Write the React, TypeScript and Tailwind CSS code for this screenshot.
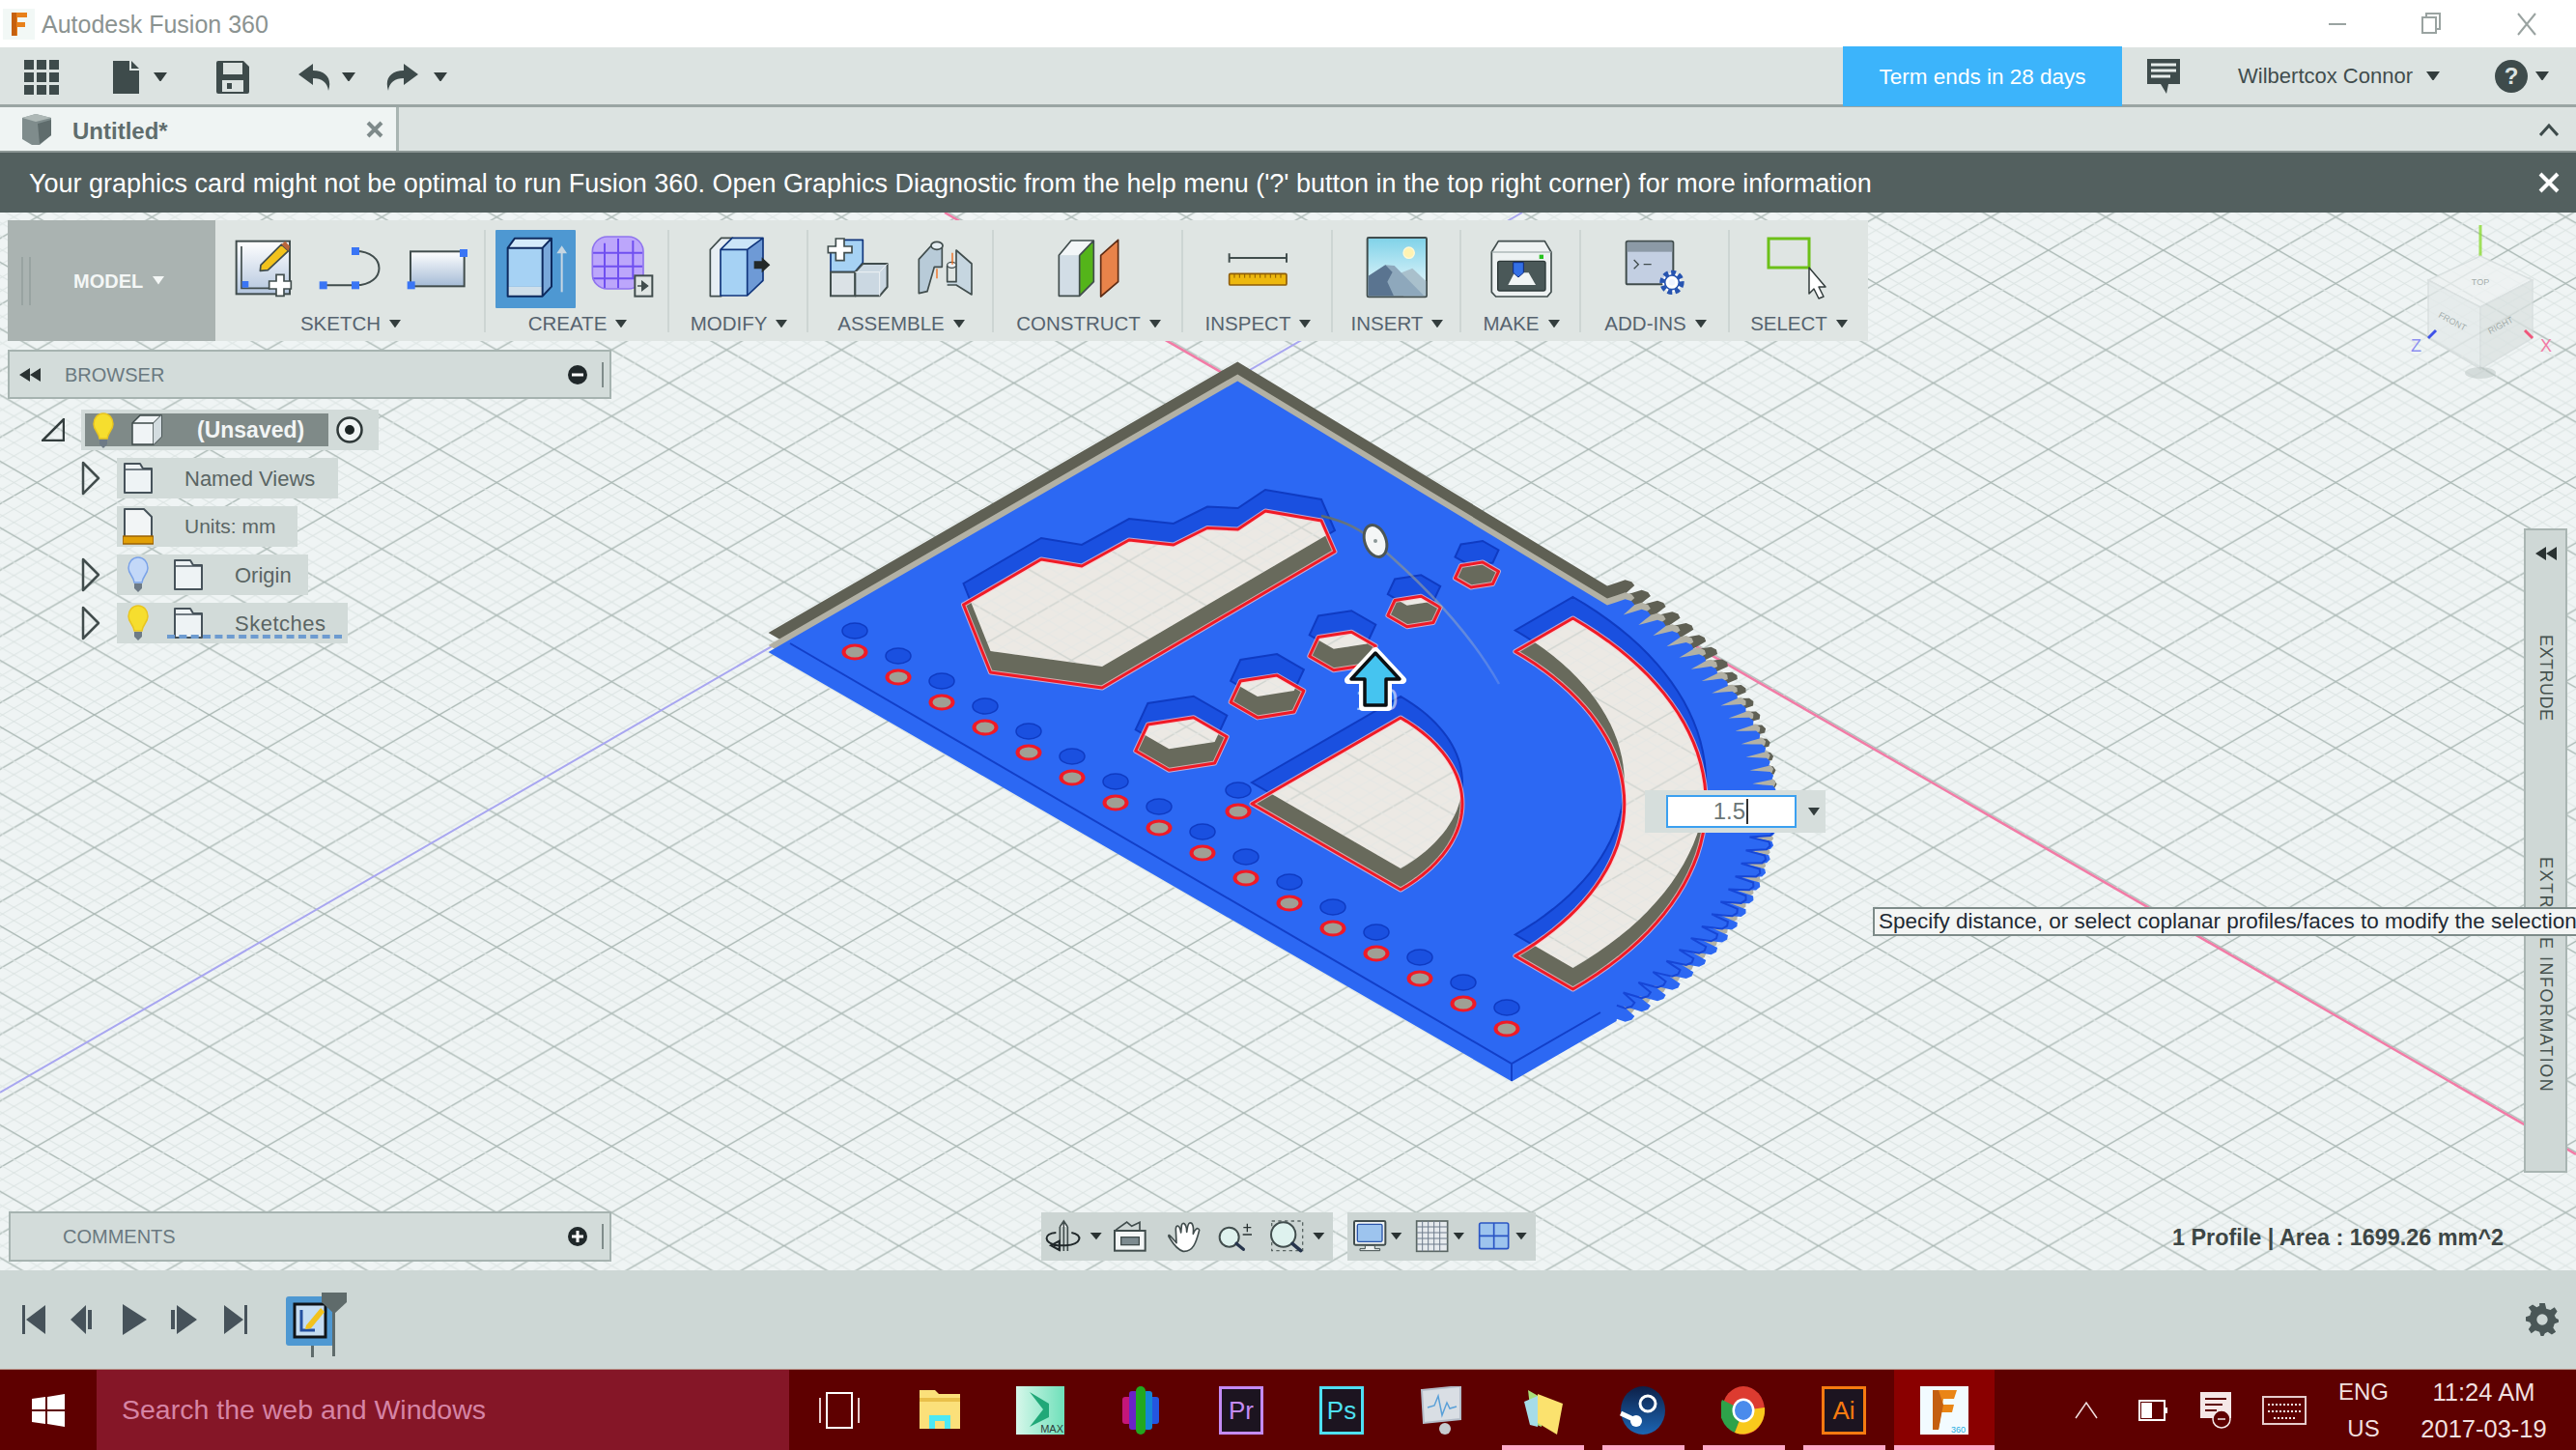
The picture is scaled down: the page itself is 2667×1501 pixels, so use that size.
import React from 'react';

const sans = 'font-["Liberation_Sans",Arial,sans-serif]';

// iso projection of the plate: u runs down-right, v runs up-right, centred on the sector apex
const P = (u: number, v: number): [number, number] => [1296 + 0.866 * (u + v), 832 + 0.5 * (u - v)];
const pol = (r: number, deg: number): [number, number] => {
  const t = (deg * Math.PI) / 180;
  return P(r * Math.cos(t), r * Math.sin(t));
};
const toPath = (pts: [number, number][]) =>
  'M' + pts.map((p) => `${p[0].toFixed(1)} ${p[1].toFixed(1)}`).join('L') + 'Z';
const openPath = (pts: [number, number][]) =>
  'M' + pts.map((p) => `${p[0].toFixed(1)} ${p[1].toFixed(1)}`).join('L');
const arc = (r: number, from: number, to: number, n = 40) =>
  Array.from({ length: n + 1 }, (_, i) => pol(r, from + ((to - from) * i) / n));

const R = 436;
const TEETH = 34;
const teeth = (() => {
  const pts: [number, number][] = [];
  for (let i = 0; i < TEETH; i++) {
    const s = 90 - (i * 90) / TEETH;
    const w = 90 / TEETH;
    pts.push(pol(R - 11, s), pol(R - 2, s - w * 0.12), pol(R + 6, s - w * 0.22), pol(R + 8, s - w * 0.5), pol(R + 6, s - w * 0.78), pol(R - 2, s - w * 0.88));
  }
  return pts;
})();
const plate = toPath([P(-453, -125), P(-453, R), ...teeth, P(R, 0), P(R, -125)]);
const lowerTeeth = openPath(teeth.slice(Math.round(TEETH * 0.55) * 6));

const bigCut = toPath([
  [997.5, 626], [1078, 579], [1120, 586], [1169, 559], [1215, 564], [1250, 546.5],
  [1281.6, 548], [1310, 529], [1368, 539], [1382, 571], [1141, 712], [1025.5, 696],
]);
const sector = toPath([[1296, 832], ...arc(178, 90, 0)]);
const slot = toPath([...arc(384, 90, 0), ...arc(315, 0, 90)]);
const hex = (cx: number, cy: number, r: number) =>
  toPath(
    [0, 60, 120, 180, 240, 300].map((d) => {
      const p = pol(r, d);
      return [p[0] - 1296 + cx, p[1] - 832 + cy] as [number, number];
    })
  );
const cuts = [
  { id: 'c1', d: bigCut },
  { id: 'c2', d: sector },
  { id: 'c3', d: slot },
  { id: 'c4', d: hex(1529, 595, 19) },
  { id: 'c5', d: hex(1464, 633, 23) },
  { id: 'c6', d: hex(1390, 674, 29) },
  { id: 'c7', d: hex(1312, 721, 32) },
  { id: 'c8', d: hex(1223, 770, 40) },
];
const holes = Array.from({ length: 16 }, (_, i) => [885 + 45 * i, 675 + 26 * i]);

const gridLines = [-5, -4, -3, -2, -1, 0, 1, 2, 3, 4, 5];

const Cut = ({ id, d }: { id: string; d: string }) => (
  <g>
    <clipPath id={id}>
      <path d={d} />
    </clipPath>
    <path d={d} transform="translate(0 -22)" fill="#1a50e0" stroke="#0f3bc2" strokeWidth="2" />
    <path d={d} fill="#686a5c" />
    <g clipPath={`url(#${id})`}>
      <path d={d} transform="translate(0 -22)" fill="#ece9e4" />
      <path d={d} transform="translate(0 -22)" fill="url(#grid)" opacity="0.45" />
    </g>
    <path d={d} fill="none" stroke="#ffc9cf" strokeWidth="5" strokeLinejoin="round" opacity="0.7" />
    <path d={d} fill="none" stroke="#f01a26" strokeWidth="3" strokeLinejoin="round" />
  </g>
);

const Hole = ({ x, y }: { x: number; y: number }) => (
  <g>
    <ellipse cx={x} cy={y - 22} rx="13" ry="8" fill="#1a50e0" stroke="#0f3bc2" strokeWidth="1.5" />
    <ellipse cx={x} cy={y} rx="13.5" ry="8.5" fill="#f01a26" />
    <ellipse cx={x} cy={y} rx="9.5" ry="5.5" fill="#a09f94" />
  </g>
);

// the workspace drawing: grid, axes, model and manipulators, in page coordinates
const Scene = () => (
  <svg className="absolute inset-0 w-full h-full" viewBox="0 220 2667 1095">
    <defs>
      <pattern id="grid" width="119" height="68.7" patternUnits="userSpaceOnUse" patternTransform="translate(2001.7 740)">
        {gridLines.map((k) => (
          <g key={k}>
            <line x1="0" x2="119" y1={k * 13.74} y2={68.7 + k * 13.74} stroke={k % 5 === 0 ? '#a9b7b3' : '#dce4e3'} strokeWidth={k % 5 === 0 ? 1.4 : 1} />
            <line x1="0" x2="119" y1={68.7 + k * 13.74} y2={k * 13.74} stroke={k % 5 === 0 ? '#a9b7b3' : '#dce4e3'} strokeWidth={k % 5 === 0 ? 1.4 : 1} />
          </g>
        ))}
      </pattern>
      <linearGradient id="fadeArc" x1="0" y1="0" x2="1" y2="1">
        <stop offset="0" stopColor="#5f6b6b" />
        <stop offset="1" stopColor="#cfd6d6" stopOpacity="0.2" />
      </linearGradient>
    </defs>
    <rect x="0" y="220" width="2667" height="1095" fill="#eff4f4" />
    <rect x="0" y="220" width="2667" height="1095" fill="url(#grid)" />
    <line x1="978" y1="220" x2="2667" y2="1195" stroke="#f27ba6" strokeWidth="2.5" />
    <line x1="0" y1="1131" x2="1576" y2="220" stroke="#a8a6f0" strokeWidth="2" />

    <path d={plate} transform="translate(0 -13)" fill="#5f6054" />
    <path d={plate} fill="#b2b1a5" />
    <path d={plate} transform="translate(0 7)" fill="#2c68f3" />
    <path d={lowerTeeth} transform="translate(0 -7)" fill="none" stroke="#1646d6" strokeWidth="2" />
    <polyline points="818,666 1565,1101 1657,1048" fill="none" stroke="#123fc8" strokeWidth="2" />
    <line x1="1565" y1="1101" x2="1565" y2="1119" stroke="#123fc8" strokeWidth="2" />

    {holes.map(([x, y]) => (
      <Hole key={x} x={x} y={y} />
    ))}
    {cuts.map((c) => (
      <Cut key={c.id} id={c.id} d={c.d} />
    ))}
    <Hole x={1282} y={840} />

    <path d="M1368 534C1395 540 1412 550 1424 562C1480 610 1525 660 1552 708" fill="none" stroke="url(#fadeArc)" strokeWidth="2.5" />
    <ellipse cx="1424" cy="560" rx="11" ry="17" transform="rotate(-20 1424 560)" fill="#f4f6f6" stroke="#4c5656" strokeWidth="3" />
    <circle cx="1424" cy="560" r="2" fill="#8a9696" />

    <text x="1425" y="735" textAnchor="middle" fontSize="32" fontFamily="Liberation Sans" fill="#ffffff" opacity="0.55">1.0</text>
    <path d="M1424 674L1452 704H1437V732H1411V704H1396Z" fill="#ffffff" stroke="#ffffff" strokeWidth="8" strokeLinejoin="round" />
    <path d="M1424 676L1449 703H1435V730H1413V703H1399Z" fill="#45c4f0" stroke="#0b0f12" strokeWidth="3.5" strokeLinejoin="round" />

    {/* view cube */}
    <g>
      <line x1="2568" y1="233" x2="2568" y2="265" stroke="#8ddc35" strokeWidth="3" opacity="0.8" />
      <g opacity="0.75">
        <path d="M2568 265L2622 290L2568 318L2514 290Z" fill="#eef2f2" stroke="#d3dada" strokeWidth="1.5" />
        <path d="M2514 290L2568 318V382L2514 350Z" fill="#e4eaea" stroke="#d3dada" strokeWidth="1.5" />
        <path d="M2622 290L2568 318V382L2622 350Z" fill="#dbe2e1" stroke="#d3dada" strokeWidth="1.5" />
        <text x="2568" y="295" textAnchor="middle" fontSize="9" fontFamily="Liberation Sans" fill="#8b9693">TOP</text>
        <text x="0" y="0" transform="translate(2524 328) rotate(28)" fontSize="9" fontFamily="Liberation Sans" fill="#8b9693">FRONT</text>
        <text x="0" y="0" transform="translate(2578 346) rotate(-28)" fontSize="9" fontFamily="Liberation Sans" fill="#8b9693">RIGHT</text>
      </g>
      <ellipse cx="2568" cy="386" rx="16" ry="6" fill="#b9c4c2" opacity="0.5" />
      <line x1="2514" y1="350" x2="2522" y2="342" stroke="#3f52e8" strokeWidth="3" />
      <line x1="2622" y1="350" x2="2614" y2="342" stroke="#f0557a" strokeWidth="3" />
      <text x="2496" y="364" fontSize="18" fontFamily="Liberation Sans" fill="#8d90f0">Z</text>
      <text x="2630" y="364" fontSize="18" fontFamily="Liberation Sans" fill="#f27ba6">X</text>
    </g>
  </svg>
);

const Caret = ({ c = '#333d3d', s = 12 }: { c?: string; s?: number }) => (
  <svg width={s} height={s * 0.7} viewBox="0 0 10 7" className="shrink-0">
    <path d="M0 0H10L5 7Z" fill={c} />
  </svg>
);

// Ribbon icons are all 75px tall, drawn in a 3x space
const Ico = ({ x, w, children }: { x: number; w: number; children: React.ReactNode }) => (
  <svg width={w / 3} height={75} viewBox={`${x} 39 ${w} 225`} className="shrink-0">
    {children}
  </svg>
);

const ink = '#414d4d';

const SketchIcon = () => (
  <Ico x={60} w={195}>
    <defs>
      <linearGradient id="sk" x1="0" y1="0" x2="0" y2="1">
        <stop offset="0" stopColor="#ffffff" />
        <stop offset="1" stopColor="#b4c6de" />
      </linearGradient>
    </defs>
    <rect x="74" y="74" width="166" height="164" fill="url(#sk)" stroke={ink} strokeWidth="6" />
    <path d="M90 90V220H180" fill="none" stroke={ink} strokeWidth="5" />
    <rect x="92" y="198" width="20" height="20" fill="#3a75f5" />
    <path d="M150 148L214 84L236 104L172 164L148 166Z" fill="#f2c21c" stroke={ink} strokeWidth="5" strokeLinejoin="round" />
    <path d="M214 84L226 74L240 90L236 104Z" fill="#b9653a" />
    <path d="M198 178H222V198H244V222H222V244H198V222H176V198H198Z" fill="#ffffff" stroke={ink} strokeWidth="5" />
  </Ico>
);
const LineIcon = () => (
  <Ico x={330} w={200}>
    <path d="M347 211H447C545 211 545 105 447 105" fill="none" stroke={ink} strokeWidth="6" />
    <rect x="335" y="199" width="24" height="24" fill="#3a75f5" />
    <rect x="435" y="199" width="24" height="24" fill="#3a75f5" />
    <rect x="435" y="93" width="24" height="24" fill="#3a75f5" />
  </Ico>
);
const RectIcon = () => (
  <Ico x={600} w={200}>
    <defs>
      <linearGradient id="rc" x1="0" y1="0" x2="0" y2="1">
        <stop offset="0" stopColor="#ffffff" />
        <stop offset="1" stopColor="#a5bbd6" />
      </linearGradient>
    </defs>
    <rect x="615" y="106" width="167" height="108" fill="url(#rc)" stroke={ink} strokeWidth="6" />
    <rect x="768" y="99" width="24" height="24" fill="#3a75f5" />
    <rect x="605" y="199" width="24" height="24" fill="#3a75f5" />
  </Ico>
);
const ExtrudeIcon = () => (
  <Ico x={900} w={200}>
    <path d="M914 95L936 65H1050L1022 95Z" fill="#d4ebfa" />
    <rect x="914" y="95" width="108" height="120" fill="#a6d2f4" />
    <rect x="914" y="215" width="108" height="30" fill="#cfdfea" />
    <path d="M1022 95L1050 65V215L1022 245Z" fill="#79a8da" />
    <path d="M914 95L936 65H1050V215L1022 245H914ZM914 95H1022V245M1022 95L1050 65" fill="none" stroke="#0e2a5e" strokeWidth="6" strokeLinejoin="round" />
    <path d="M1082 232V110" stroke="#c6d6e2" strokeWidth="6" />
    <path d="M1082 88L1098 112H1066Z" fill="#c6d6e2" />
  </Ico>
);
const FormIcon = () => (
  <Ico x={1170} w={205}>
    <rect x="1180" y="60" width="158" height="162" rx="46" fill="#bca6fb" />
    <path d="M1180 110H1335M1180 152H1335M1180 190H1310M1218 80V220M1260 66V220M1306 72V190" stroke="#6f4ff0" strokeWidth="6" fill="none" />
    <rect x="1180" y="60" width="158" height="162" rx="46" fill="none" stroke="#8f74ee" strokeWidth="5" />
    <rect x="1312" y="181" width="54" height="64" fill="#dfe5e3" stroke={ink} strokeWidth="6" />
    <path d="M1320 213H1334M1334 199L1352 213L1334 227Z" fill={ink} stroke={ink} strokeWidth="4" />
  </Ico>
);
const ModifyIcon = () => (
  <Ico x={40} w={200}>
    <path d="M50 100L84 64H120L84 100V245H50Z" fill="#e7eef3" stroke={ink} strokeWidth="5" strokeLinejoin="round" />
    <path d="M82 100H165V243H82Z" fill="#a6d2f4" />
    <path d="M82 100L118 64H214L165 100Z" fill="#cbe5f8" />
    <path d="M165 100L214 64V196L165 243Z" fill="#6e9ad6" />
    <path d="M82 100L118 64H214V196L165 243H82ZM82 100H165V243M165 100L214 64" fill="none" stroke="#10357c" strokeWidth="5" strokeLinejoin="round" />
    <path d="M186 136H210V124L236 148L210 172V160H186Z" fill="#222828" />
  </Ico>
);
const AssembleIcon = () => (
  <Ico x={405} w={200}>
    <path d="M420 110L450 70H520V140L495 170H420Z" fill="#a6d2f4" stroke="#10357c" strokeWidth="5" strokeLinejoin="round" />
    <rect x="420" y="170" width="76" height="74" fill="#dbe2e6" stroke={ink} strokeWidth="6" />
    <path d="M496 170L520 144H596V216L572 244H496Z" fill="#cbd8e2" stroke={ink} strokeWidth="6" strokeLinejoin="round" />
    <path d="M496 170H572V244M572 170L596 144" fill="none" stroke="#eef2f4" strokeWidth="3" />
    <path d="M436 66H462V90H486V110H462V134H436V110H412V90H436Z" fill="#ffffff" stroke={ink} strokeWidth="5" />
  </Ico>
);
const JointIcon = () => (
  <Ico x={680} w={195}>
    <path d="M696 130L738 84L768 84V154H744L722 230L696 236Z" fill="#b8cbd8" stroke={ink} strokeWidth="5" strokeLinejoin="round" />
    <ellipse cx="752" cy="88" rx="18" ry="12" fill="#e4edf2" stroke={ink} strokeWidth="5" />
    <path d="M752 160V190" stroke="#f06a18" strokeWidth="4" />
    <path d="M784 150V200H812V102L860 144V240L812 210H784" fill="#c6d6e0" stroke={ink} strokeWidth="5" strokeLinejoin="round" />
    <ellipse cx="798" cy="148" rx="14" ry="9" fill="#eef2f5" stroke={ink} strokeWidth="4" />
    <path d="M800 110V146" stroke="#f06a18" strokeWidth="4" />
  </Ico>
);
const ConstructIcon = () => (
  <Ico x={1125} w={200}>
    <path d="M1132 118L1170 72H1240L1196 118Z" fill="#f3f6f8" />
    <path d="M1132 118H1196V244H1132Z" fill="#d2dde6" />
    <path d="M1196 118L1240 72V200L1196 244Z" fill="#54b41a" />
    <path d="M1132 118L1170 72H1240V200L1196 244H1132ZM1196 118V244M1196 118L1240 72" fill="none" stroke={ink} strokeWidth="5" strokeLinejoin="round" />
    <path d="M1262 118L1316 70V200L1262 246Z" fill="#e8834a" stroke="#5e2c14" strokeWidth="5" strokeLinejoin="round" />
  </Ico>
);
const InspectIcon = () => (
  <Ico x={85} w={200}>
    <path d="M96 126H274M96 112V140M274 112V140" stroke={ink} strokeWidth="6" fill="none" />
    <rect x="96" y="175" width="178" height="35" rx="4" fill="#edb80e" stroke="#8e5c06" strokeWidth="5" />
    <path d="M112 176v12M128 176v12M144 176v12M160 176v12M176 176v12M192 176v12M208 176v12M224 176v12M240 176v12M256 176v12" stroke="#8e5c06" strokeWidth="3" />
  </Ico>
);
const InsertIcon = () => (
  <Ico x={520} w={200}>
    <defs>
      <linearGradient id="sky" x1="0" y1="0" x2="0" y2="1">
        <stop offset="0" stopColor="#7fd2e8" />
        <stop offset="1" stopColor="#f4fcff" />
      </linearGradient>
    </defs>
    <rect x="528" y="63" width="184" height="184" rx="4" fill="url(#sky)" stroke={ink} strokeWidth="6" />
    <circle cx="657" cy="110" r="17" fill="#fff3b2" stroke="#fff9d6" strokeWidth="4" />
    <path d="M634 172L668 158L710 198V244H640Z" fill="#a9c0cc" />
    <path d="M531 182L584 148L612 150L704 244H531Z" fill="#8ea8bc" />
    <path d="M531 182L584 148L606 170L590 200L610 244H531Z" fill="#5a7490" />
  </Ico>
);
const MakeIcon = () => (
  <Ico x={905} w={205}>
    <path d="M915 108L936 74H1080L1100 108V232L1088 246H928L915 232Z" fill="#eef2f2" stroke={ink} strokeWidth="5" strokeLinejoin="round" />
    <path d="M916 108H1099" stroke="#aeb9b9" strokeWidth="4" />
    <rect x="934" y="136" width="148" height="92" rx="6" fill="#4a5858" stroke="#2d3838" strokeWidth="4" />
    <path d="M966 210L986 172H1030L1052 210Z" fill="#f0f4f4" />
    <path d="M982 140H1014V172L998 186L982 172Z" fill="#3470e6" stroke="#0e2a7c" strokeWidth="3" />
    <rect x="1063" y="116" width="13" height="13" fill="#26c21e" />
  </Ico>
);
const AddinsIcon = () => (
  <Ico x={1320} w={200}>
    <rect x="1328" y="74" width="146" height="134" rx="5" fill="#c3cfe2" stroke={ink} strokeWidth="6" />
    <rect x="1331" y="77" width="140" height="30" fill="#8c9aa6" />
    <path d="M1352 132L1366 146L1352 160M1382 146H1406" stroke={ink} strokeWidth="4" fill="none" />
    <circle cx="1470" cy="202" r="30" fill="#ffffff" stroke="#2754b0" strokeWidth="16" strokeDasharray="14 9" />
    <circle cx="1470" cy="202" r="22" fill="#ffffff" stroke="#2754b0" strokeWidth="5" />
    <circle cx="1470" cy="202" r="10" fill="#eef3ff" />
  </Ico>
);
const SelectIcon = () => (
  <svg width="75" height="75" viewBox="1827 238 75 75" className="shrink-0">
    <rect x="1833" y="247" width="42" height="30" fill="none" stroke="#6cc018" strokeWidth="3" />
    <path d="M1875 277L1892 297H1885L1890 307L1885 309L1880 299L1875 304Z" fill="#fff" stroke="#333d3d" strokeWidth="1.5" strokeLinejoin="round" />
  </svg>
);

const groups: { label: string; w: string; gap: string; icons: React.ReactNode }[] = [
  { label: 'SKETCH', w: 'w-[280px]', gap: 'gap-[24px]', icons: <><SketchIcon /><LineIcon /><RectIcon /></> },
  { label: 'CREATE', w: 'w-[190px]', gap: 'gap-[14px] pr-[5px]', icons: <><div className="w-[83px] h-[81px] bg-[#4e98d2] rounded-[1px] flex justify-center"><ExtrudeIcon /></div><FormIcon /></> },
  { label: 'MODIFY', w: 'w-[144px]', gap: 'gap-0', icons: <ModifyIcon /> },
  { label: 'ASSEMBLE', w: 'w-[192px]', gap: 'gap-[25px]', icons: <><AssembleIcon /><JointIcon /></> },
  { label: 'CONSTRUCT', w: 'w-[196px]', gap: 'gap-0', icons: <ConstructIcon /> },
  { label: 'INSPECT', w: 'w-[155px]', gap: 'gap-0', icons: <InspectIcon /> },
  { label: 'INSERT', w: 'w-[133px]', gap: 'gap-0', icons: <InsertIcon /> },
  { label: 'MAKE', w: 'w-[124px]', gap: 'gap-0', icons: <MakeIcon /> },
  { label: 'ADD-INS', w: 'w-[154px]', gap: 'gap-0', icons: <AddinsIcon /> },
  { label: 'SELECT', w: 'w-[143px]', gap: 'gap-0', icons: <SelectIcon /> },
];

const Ribbon = () => (
  <div className="absolute left-[8px] top-[8px] h-[125px] flex bg-[#dfe5e3]">
    <div className="w-[215px] bg-[#aab3b1] flex items-center relative">
      <div className="w-[10px] h-[50px] ml-[14px] border-x-2 border-[#98a3a1]" />
      <span className="ml-[44px] text-[20px] font-bold text-[#f4f7f6]">MODEL</span>
      <span className="ml-[10px]"><Caret c="#f4f7f6" /></span>
    </div>
    {groups.map((g, i) => (
      <div key={g.label} className={`${g.w} shrink-0 flex flex-col items-center pt-[10px] relative`}>
        <div className={`h-[82px] flex ${g.gap}`}>{g.icons}</div>
        <div className="flex items-center gap-[9px] h-[30px]">
          <span className="text-[20.5px] leading-none text-[#56636f]">{g.label}</span>
          <Caret />
        </div>
        {i < groups.length - 1 && <div className="absolute right-0 top-[10px] w-[2px] h-[106px] bg-[#cdd5d3]" />}
      </div>
    ))}
  </div>
);

const Bulb = ({ on }: { on: boolean }) => (
  <svg width="22" height="38" viewBox="0 0 22 38">
    <path d="M11 1C5 1 1 6 1 12C1 18 6 20 7 27H15C16 20 21 18 21 12C21 6 17 1 11 1Z" fill={on ? '#f6de2e' : '#c3d8f8'} stroke={on ? '#e9c51f' : '#7aa2e8'} strokeWidth="1.5" />
    <path d="M7 28H15V33L11 37L7 33Z" fill="#6d7a86" />
  </svg>
);
const Folder = () => (
  <svg width="32" height="34" viewBox="0 0 32 34">
    <path d="M2 7V2H18L21 7H30V32H2Z" fill="#eef3f5" stroke="#46525a" strokeWidth="2" strokeLinejoin="round" />
    <path d="M2 8H30" stroke="#46525a" strokeWidth="1.5" />
  </svg>
);
const Chev = () => (
  <svg width="20" height="36" viewBox="0 0 20 36" className="shrink-0">
    <path d="M2 2L18 18L2 34Z" fill="none" stroke="#424d4d" strokeWidth="2.5" strokeLinejoin="round" />
  </svg>
);

const Browser = () => (
  <div className="absolute left-[8px] top-[142px] w-[625px]">
    <div className="h-[51px] bg-[#d3dcda] border-2 border-[#a6b3b0] flex items-center">
      <svg width="22" height="14" viewBox="0 0 22 14" className="ml-[10px]">
        <path d="M11 0V14L0 7ZM22 0V14L11 7Z" fill="#2a3232" />
      </svg>
      <span className="ml-[25px] text-[20px] text-[#6a7980]">BROWSER</span>
      <svg width="20" height="20" viewBox="0 0 20 20" className="ml-auto">
        <circle cx="10" cy="10" r="10" fill="#20282a" />
        <rect x="4" y="8.5" width="12" height="3" fill="#fff" />
      </svg>
      <div className="w-[4px] h-[26px] ml-[15px] mr-[4px] border-l-2 border-[#7f8b8a]" />
    </div>
    <div className="mt-[11px] flex flex-col gap-[8px] text-[22px] text-[#5a6564]">
      <div className="flex items-center h-[42px]">
        <svg width="24" height="24" viewBox="0 0 24 24" className="ml-[35px]">
          <path d="M23 1V23H1Z" fill="none" stroke="#333d3d" strokeWidth="2.5" />
        </svg>
        <div className="ml-[17px] w-[308px] h-[42px] bg-[#d2dbd9] flex items-center px-[4px]">
          <div className="w-[252px] h-[34px] bg-[#7f8a88] flex items-center">
            <span className="ml-[8px] mt-[1px]"><Bulb on /></span>
            <svg width="34" height="34" viewBox="0 0 34 34" className="ml-[17px]">
              <path d="M2 10L10 2H32V24L24 32H2Z" fill="#f0f4f6" stroke="#3e4a4a" strokeWidth="1.5" />
              <path d="M2 10H24V32M24 10L32 2" fill="none" stroke="#3e4a4a" strokeWidth="1.5" />
              <path d="M24 10L32 2V24L24 32Z" fill="#d3dce0" />
            </svg>
            <span className="ml-[35px] text-[23px] font-bold text-[#f2f5f5]">(Unsaved)</span>
          </div>
          <svg width="28" height="28" viewBox="0 0 28 28" className="ml-[8px]">
            <circle cx="14" cy="14" r="12.5" fill="#f0f4f4" stroke="#2e3838" strokeWidth="2.5" />
            <circle cx="14" cy="14" r="5" fill="#1c2424" />
          </svg>
        </div>
      </div>
      <div className="flex items-center h-[42px] pl-[76px]">
        <Chev />
        <div className="ml-[17px] w-[229px] h-[42px] bg-[#d2dbd9] flex items-center pl-[6px]">
          <Folder />
          <span className="ml-[32px] whitespace-nowrap">Named Views</span>
        </div>
      </div>
      <div className="flex items-center h-[42px] pl-[113px]">
        <div className="w-[187px] h-[42px] bg-[#d2dbd9] flex items-center pl-[6px]">
          <svg width="32" height="38" viewBox="0 0 32 38">
            <path d="M2 30V1H22L30 9V30Z" fill="#f2f5f6" stroke="#46525a" strokeWidth="2" strokeLinejoin="round" />
            <rect x="0" y="29" width="32" height="8" rx="1" fill="#e2a006" stroke="#9a6204" strokeWidth="1.5" />
          </svg>
          <span className="ml-[32px] text-[21px]">Units: mm</span>
        </div>
      </div>
      <div className="flex items-center h-[42px] pl-[76px]">
        <Chev />
        <div className="ml-[17px] w-[198px] h-[42px] bg-[#d2dbd9] flex items-center pl-[11px]">
          <Bulb on={false} />
          <span className="ml-[25px]"><Folder /></span>
          <span className="ml-[32px]">Origin</span>
        </div>
      </div>
      <div className="flex items-center h-[42px] pl-[76px]">
        <Chev />
        <div className="ml-[17px] w-[239px] h-[42px] bg-[#d2dbd9] flex items-center pl-[11px] relative">
          <Bulb on />
          <span className="ml-[25px]"><Folder /></span>
          <span className="ml-[32px] tracking-[0.5px]">Sketches</span>
          <div className="absolute left-[52px] right-[6px] top-[32px] h-[5px] border-b-4 border-dashed border-[#6d9bd0]" />
        </div>
      </div>
    </div>
  </div>
);

const ViewControls = () => (
  <div className="absolute left-[1078px] top-[1035px] h-[50px] flex gap-[15px]">
    <div className="w-[302px] h-[50px] bg-[#ccd5d3] flex items-center">
      <svg width="302" height="50" viewBox="54 15 906 150">
        <path d="M124 42V135M112 60L124 42L136 60M112 60V135M136 60V135" fill="#fff" stroke={ink} strokeWidth="5" />
        <path d="M105 118C60 110 60 80 100 78M148 78C185 84 180 115 130 118H92M110 104L84 118L110 132Z" fill="none" stroke="#20282a" strokeWidth="6" />
        <path d="M206 78H242L225 100Z" fill="#2a3333" />
        <path d="M285 70L320 45L335 58L360 46V72" fill="none" stroke={ink} strokeWidth="5" />
        <rect x="282" y="72" width="95" height="62" fill="#f4f7f7" stroke={ink} strokeWidth="6" />
        <rect x="302" y="92" width="56" height="24" fill="#7d8b90" stroke={ink} strokeWidth="4" />
        <path d="M450 90C460 105 470 128 495 136C525 138 535 110 545 70C540 58 530 70 526 82C528 60 525 46 515 48C510 50 508 60 506 76C506 46 492 44 490 56L488 78C484 52 472 52 472 68L474 110C462 96 448 78 450 90Z" fill="#fff" stroke={ink} strokeWidth="5" strokeLinejoin="round" />
        <circle cx="638" cy="92" r="30" fill="#def2ee" stroke={ink} strokeWidth="6" />
        <path d="M660 112L682 130" stroke="#26344c" strokeWidth="10" strokeLinecap="round" />
        <path d="M694 50V76M682 62H706M680 84H708" stroke="#2a3333" strokeWidth="4" />
        <rect x="770" y="42" width="96" height="92" fill="none" stroke="#5a6664" strokeWidth="4" strokeDasharray="10 10" />
        <circle cx="806" cy="84" r="38" fill="#def2ee" stroke={ink} strokeWidth="6" />
        <path d="M834 112L860 134" stroke="#26344c" strokeWidth="11" strokeLinecap="round" />
        <path d="M898 78H934L916 100Z" fill="#2a3333" />
      </svg>
    </div>
    <div className="w-[195px] h-[50px] bg-[#ccd5d3] flex items-center">
      <svg width="195" height="50" viewBox="1005 15 585 150">
        <rect x="1026" y="42" width="97" height="74" rx="4" fill="#f1f4f4" stroke={ink} strokeWidth="6" />
        <rect x="1036" y="52" width="77" height="54" rx="4" fill="#9dc4ee" stroke="#2a55aa" strokeWidth="4" />
        <path d="M1060 118H1090V128H1106V134H1044V128H1060Z" fill="#eef1f1" stroke={ink} strokeWidth="3" />
        <path d="M1140 78H1174L1157 100Z" fill="#2a3333" />
        <rect x="1220" y="42" width="96" height="94" fill="#e6eaee" stroke="#5a6664" strokeWidth="5" />
        <path d="M1220 60H1316M1220 78H1316M1220 96H1316M1220 114H1316M1238 42V136M1256 42V136M1274 42V136M1292 42V136" stroke="#6f7c8c" strokeWidth="3" />
        <path d="M1334 78H1368L1351 100Z" fill="#2a3333" />
        <rect x="1415" y="48" width="90" height="80" rx="5" fill="#9dc4ee" stroke="#2a55c4" strokeWidth="5" />
        <path d="M1460 48V128M1415 88H1505" stroke="#2a55c4" strokeWidth="5" />
        <path d="M1528 78H1562L1545 100Z" fill="#2a3333" />
      </svg>
    </div>
  </div>
);

const RightPanel = () => (
  <div className="absolute left-[2613px] top-[327px] w-[45px] h-[667px] bg-[#cfd8d6] border-2 border-[#a9b5b2] flex flex-col items-center">
    <svg width="22" height="14" viewBox="0 0 22 14" className="mt-[17px]">
      <path d="M11 0V14L0 7ZM22 0V14L11 7Z" fill="#2a3232" />
    </svg>
    <span className="mt-[77px] [writing-mode:vertical-rl] text-[18px] tracking-[0.5px] text-[#46524f]">EXTRUDE</span>
    <span className="mt-[140px] [writing-mode:vertical-rl] text-[18px] tracking-[1.5px] text-[#46524f]">EXTRUDE INFORMATION</span>
  </div>
);

const AdobeTile = ({ box, t }: { box: string; t: string }) => (
  <div className={`w-[46px] h-[50px] bg-[#1c1420] border-[3px] flex items-center justify-center text-[26px] leading-none ${box}`}>
    {t}
  </div>
);

const Taskbar = () => {
  const slots: { el: React.ReactNode; active?: boolean }[] = [
    {
      el: (
        <svg width="42" height="42" viewBox="0 0 42 42">
          <rect x="8" y="3" width="26" height="36" fill="none" stroke="#fff" strokeWidth="2" />
          <path d="M1 8V34M41 8V34" stroke="#e7cccc" strokeWidth="2" />
        </svg>
      ),
    },
    {
      el: (
        <svg width="46" height="46" viewBox="0 0 46 46">
          <path d="M2 6V2H18L22 6H44V42H2Z" fill="#fbe07a" />
          <rect x="2" y="10" width="42" height="4" fill="#e9c04a" />
          <path d="M12 42V28H34V42H28V34H18V42Z" fill="#4de8f4" />
        </svg>
      ),
    },
    {
      el: (
        <svg width="50" height="50" viewBox="0 0 50 50">
          <defs>
            <linearGradient id="mx" x1="0" y1="0" x2="1" y2="0">
              <stop offset="0" stopColor="#d6f7ea" />
              <stop offset="1" stopColor="#6fe0ba" />
            </linearGradient>
          </defs>
          <rect width="50" height="50" fill="url(#mx)" />
          <path d="M14 6L34 18V32L14 42L28 24Z" fill="#21a878" />
          <text x="49" y="48" textAnchor="end" fontSize="11" fontFamily="Liberation Sans" fill="#2f3e3a">MAX</text>
        </svg>
      ),
    },
    {
      el: (
        <svg width="44" height="50" viewBox="0 0 44 50">
          <rect x="3" y="11" width="10" height="28" rx="3" fill="#c5167a" />
          <rect x="31" y="11" width="10" height="28" rx="3" fill="#2456e0" />
          <rect x="10" y="5" width="9" height="40" rx="3" fill="#6a22c8" />
          <rect x="25" y="5" width="9" height="40" rx="3" fill="#1486d6" />
          <rect x="17" y="0" width="10" height="50" rx="5" fill="#22a81e" />
        </svg>
      ),
    },
    { el: <AdobeTile box="border-[#c48bf5] text-[#c48bf5]" t="Pr" /> },
    { el: <AdobeTile box="border-[#4ee0f4] text-[#4ee0f4]" t="Ps" /> },
    {
      el: (
        <svg width="46" height="50" viewBox="0 0 46 50">
          <path d="M2 4L42 0V34L4 38Z" fill="#d9dee4" stroke="#b4bdc9" strokeWidth="2" />
          <path d="M8 22L15 20L19 10L23 30L28 17L31 23L38 21" fill="none" stroke="#5aa0d8" strokeWidth="1.5" />
          <circle cx="26" cy="44" r="6" fill="#c6cbd0" />
        </svg>
      ),
    },
    {
      el: (
        <svg width="46" height="50" viewBox="0 0 46 50">
          <path d="M8 4L22 12L22 42L12 38Z" fill="#a8e07a" />
          <path d="M4 16L18 10V42L10 40Z" fill="#a6dce8" />
          <path d="M18 8L44 18L38 50L18 38Z" fill="#fbe26e" />
        </svg>
      ),
    },
    {
      el: (
        <svg width="48" height="50" viewBox="0 0 48 50">
          <defs>
            <linearGradient id="st" x1="0" y1="0" x2="0" y2="1">
              <stop offset="0" stopColor="#0d2048" />
              <stop offset="1" stopColor="#1c66b4" />
            </linearGradient>
          </defs>
          <ellipse cx="24" cy="25" rx="23" ry="25" fill="url(#st)" />
          <circle cx="29" cy="18" r="8" fill="none" stroke="#fff" strokeWidth="3" />
          <path d="M1 28L18 36" stroke="#fff" strokeWidth="5" />
          <circle cx="17" cy="36" r="6" fill="#fff" />
        </svg>
      ),
    },
    {
      el: (
        <svg width="46" height="50" viewBox="0 0 46 50">
          <ellipse cx="23" cy="25" rx="22" ry="25" fill="#dd3b30" />
          <path d="M23 25L1 14A23 25 0 0 0 14 48Z" fill="#2ea24a" />
          <path d="M23 25L14 48A23 25 0 0 0 45 22Z" fill="#f8c91c" />
          <ellipse cx="23" cy="25" rx="11.5" ry="12.5" fill="#fff" />
          <ellipse cx="23" cy="25" rx="9" ry="10" fill="#4a8bec" />
        </svg>
      ),
    },
    { el: <AdobeTile box="border-[#f77a10] text-[#f77a10]" t="Ai" /> },
    {
      el: (
        <svg width="50" height="50" viewBox="0 0 50 50">
          <rect width="50" height="50" fill="#f2fbff" />
          <path d="M13 4H38L35 13H24L23 19H35L33 27H22L19 45H13Z" fill="#ea8516" />
          <path d="M13 4H19L24 19L19 45H13Z" fill="#c45f10" />
          <text x="47" y="48" textAnchor="end" fontSize="9" fontFamily="Liberation Sans" fill="#2aaee0">360</text>
        </svg>
      ),
      active: true,
    },
  ];
  return (
    <div className="h-[84px] bg-[#5e0000] border-t border-[#b58a80] flex text-[#f1dfdf]">
      <div className="w-[100px] flex items-center justify-center">
        <svg width="34" height="34" viewBox="0 0 34 34">
          <path d="M0 5L14 3V16H0ZM16 3L34 0V16H16ZM0 18H14V31L0 29ZM16 18H34V34L16 31Z" fill="#ffffff" />
        </svg>
      </div>
      <div className="w-[717px] bg-[#851627] flex items-center pl-[26px] text-[28.5px] text-[#d684a5]">Search the web and Windows</div>
      {slots.map((s, i) => (
        <div key={i} className={`w-[104px] shrink-0 flex items-center justify-center relative ${s.active ? 'bg-[#8a0000]' : ''}`}>
          {s.el}
          {i >= 7 && i <= 10 && <div className="absolute bottom-0 h-[5px] bg-[#ffa9c8] w-[85px]" />}
          {s.active && <div className="absolute bottom-0 w-full h-[5px] bg-[#ffa9c8]" />}
        </div>
      ))}
      <div className="flex items-center ml-[82px]">
        <svg width="26" height="20" viewBox="0 0 26 20">
          <path d="M2 18L13 2L24 18" fill="none" stroke="#f1dfdf" strokeWidth="1.5" />
        </svg>
        <svg width="30" height="26" viewBox="0 0 30 26" className="ml-[41px]">
          <rect x="1" y="3" width="26" height="20" fill="none" stroke="#fff" strokeWidth="2" />
          <rect x="3" y="5" width="11" height="16" fill="#fff" />
          <rect x="27" y="10" width="3" height="6" fill="#fff" />
        </svg>
        <svg width="32" height="38" viewBox="0 0 32 38" className="ml-[34px]">
          <rect x="0" y="0" width="32" height="27" fill="#f5e8e8" />
          <path d="M5 7H27M5 13H23M5 19H17" stroke="#5e0000" strokeWidth="2" />
          <circle cx="22" cy="28" r="9" fill="#5e0000" stroke="#f5e8e8" strokeWidth="1.5" />
          <path d="M18 28H26" stroke="#f5e8e8" strokeWidth="1.5" />
        </svg>
        <svg width="46" height="30" viewBox="0 0 46 30" className="ml-[32px]">
          <rect x="1" y="1" width="44" height="28" fill="none" stroke="#e6cccc" strokeWidth="2" />
          <path d="M6 9H40M6 16H40M12 23H34" stroke="#f5e8e8" strokeWidth="2" strokeDasharray="2 2" />
        </svg>
      </div>
      <div className="flex flex-col items-center justify-center gap-[8px] ml-[34px] w-[50px] text-[24px] leading-[30px]">
        <span>ENG</span>
        <span>US</span>
      </div>
      <div className="flex flex-col items-center justify-center gap-[8px] ml-[32px] w-[135px] text-[25.5px] leading-[30px] whitespace-nowrap">
        <span>11:24 AM</span>
        <span>2017-03-19</span>
      </div>
    </div>
  );
};

export default function App() {
  return (
    <div className={`w-[2667px] h-[1501px] flex flex-col overflow-hidden bg-[#eff4f4] ${sans}`}>
      <div className="h-[49px] bg-white flex items-center shrink-0">
        <div className="ml-[3px] w-[33px] h-[32px] bg-[#f2f8f6] flex items-center justify-center">
          <svg width="18" height="26" viewBox="0 0 18 26">
            <path d="M1 1H17V6H7V11H15V16H7V25H1Z" fill="#e8801a" />
            <path d="M1 1H6V25H1Z" fill="#c5610f" />
          </svg>
        </div>
        <span className="ml-[7px] mt-[2px] text-[25px] text-[#8b9391]">Autodesk Fusion 360</span>
        <svg width="220" height="30" viewBox="0 0 220 30" className="ml-auto mr-[40px]">
          <path d="M4 15H22" stroke="#9aa3a1" strokeWidth="2" />
          <rect x="101" y="8" width="14" height="16" fill="none" stroke="#9aa3a1" strokeWidth="2" />
          <path d="M105 8V4H119V20H115" fill="none" stroke="#9aa3a1" strokeWidth="2" />
          <path d="M200 4L218 26M218 4L200 26" stroke="#9aa3a1" strokeWidth="2" />
        </svg>
      </div>

      <div className="h-[62px] bg-[#dce3e1] border-b-[3px] border-[#9aa5a3] flex items-center shrink-0 relative pt-[2px]">
        <svg width="36" height="36" viewBox="0 0 36 36" className="ml-[25px]">
          <path d="M0 0H10V10H0ZM13 0H23V10H13ZM26 0H36V10H26ZM0 13H10V23H0ZM13 13H23V23H13ZM26 13H36V23H26ZM0 26H10V36H0ZM13 26H23V36H13ZM26 26H36V36H26Z" fill="#3e4b4b" />
        </svg>
        <svg width="27" height="34" viewBox="0 0 27 34" className="ml-[56px]">
          <path d="M0 0H17V10H27V34H0ZM19 0L27 8H19Z" fill="#3e4b4b" />
        </svg>
        <span className="ml-[15px]"><Caret s={14} /></span>
        <svg width="34" height="34" viewBox="0 0 34 34" className="ml-[51px]">
          <path d="M0 2Q0 0 2 0H28L34 6V32Q34 34 32 34H2Q0 34 0 32ZM7 2V14H27V2ZM6 20V32H28V20ZM11 23H16V29H11Z" fill="#3e4b4b" fillRule="evenodd" />
        </svg>
        <svg width="34" height="32" viewBox="0 0 34 32" className="ml-[51px]">
          <path d="M15 2L0 13L15 24V17C24 17 30 21 31 30C35 18 29 9 15 9Z" fill="#3e4b4b" />
        </svg>
        <span className="ml-[11px]"><Caret s={14} /></span>
        <svg width="34" height="32" viewBox="0 0 34 32" className="ml-[31px]">
          <path d="M19 2L34 13L19 24V17C10 17 4 21 3 30C-1 18 5 9 19 9Z" fill="#3e4b4b" />
        </svg>
        <span className="ml-[16px]"><Caret s={14} /></span>
        <div className="ml-auto flex items-center h-[59px] mt-[-2px]">
          <div className="w-[289px] h-[62px] bg-[#3cb4fb] flex items-center justify-center text-[22.5px] text-white pt-[2px]">Term ends in 28 days</div>
          <svg width="34" height="36" viewBox="0 0 34 36" className="ml-[26px]">
            <path d="M0 0H34V26H22L20 36L14 26H0Z" fill="#3e4b4b" />
            <path d="M4 6H30M4 12H30M4 18H24" stroke="#e6ecea" strokeWidth="3" />
          </svg>
          <span className="ml-[60px] text-[22px] text-[#414d4d]">Wilbertcox Connor</span>
          <span className="ml-[14px]"><Caret s={14} /></span>
          <svg width="34" height="34" viewBox="0 0 34 34" className="ml-[57px]">
            <circle cx="17" cy="17" r="17" fill="#3e4b4b" />
            <text x="17" y="25" textAnchor="middle" fontSize="24" fontWeight="700" fontFamily="Liberation Sans" fill="#dce3e1">?</text>
          </svg>
          <span className="ml-[8px] mr-[28px]"><Caret s={14} /></span>
        </div>
      </div>

      <div className="h-[45px] bg-[#dce3e1] flex shrink-0 items-stretch">
        <div className="w-[413px] bg-[#eff4f3] border-r-[3px] border-[#a9b5b2] flex items-center">
          <svg width="34" height="32" viewBox="0 0 34 32" className="ml-[21px]">
            <path d="M2 4L16 0L32 4V22L20 32H12L2 26Z" fill="#7f8c8c" />
            <path d="M2 4L16 8L32 4L16 0Z" fill="#aeb8b6" />
            <path d="M18 10L32 6V22L20 31Z" fill="#5f6c6c" />
          </svg>
          <span className="ml-[20px] mt-[4px] text-[24px] font-bold text-[#5f6d6d]">Untitled*</span>
          <svg width="18" height="18" viewBox="0 0 18 18" className="ml-auto mr-[13px]">
            <path d="M2 2L16 16M16 2L2 16" stroke="#7e8a8a" strokeWidth="4" />
          </svg>
        </div>
        <svg width="20" height="14" viewBox="0 0 20 14" className="ml-auto mr-[18px] self-center">
          <path d="M1 13L10 3L19 13" fill="none" stroke="#3e4b4b" strokeWidth="3" />
        </svg>
      </div>

      <div className="h-[64px] bg-[#53605f] border-t-2 border-[#8c9795] flex items-center shrink-0 text-white">
        <span className="ml-[30px] mt-[2px] text-[27px]">Your graphics card might not be optimal to run Fusion 360. Open Graphics Diagnostic from the help menu ('?' button in the top right corner) for more information</span>
        <svg width="22" height="22" viewBox="0 0 22 22" className="ml-auto mr-[17px]">
          <path d="M2 2L20 20M20 2L2 20" stroke="#ffffff" strokeWidth="4" />
        </svg>
      </div>

      <div className="relative flex-1">
        <Scene />
        <Ribbon />
        <Browser />
        <div className="absolute left-[9px] top-[1034px] w-[624px] h-[52px] bg-[#d3dcda] border-2 border-[#a6b3b0] flex items-center">
          <span className="ml-[54px] text-[20px] text-[#6a7980]">COMMENTS</span>
          <svg width="20" height="20" viewBox="0 0 20 20" className="ml-auto">
            <circle cx="10" cy="10" r="10" fill="#20282a" />
            <path d="M4 10H16M10 4V16" stroke="#fff" strokeWidth="3" />
          </svg>
          <div className="w-[4px] h-[26px] ml-[15px] mr-[4px] border-l-2 border-[#7f8b8a]" />
        </div>
        <ViewControls />
        <span className="absolute left-[2249px] top-[1044px] text-[23.4px] font-bold text-[#3d4645] whitespace-nowrap">1 Profile | Area : 1699.26 mm^2</span>
        <RightPanel />
        <div className="absolute left-[1703px] top-[598px] w-[187px] h-[44px] bg-[#d6dedc] flex items-center">
          <div className="ml-[22px] w-[135px] h-[34px] bg-white border-2 border-[#3ba0f0] flex items-center justify-end pr-[48px] text-[24px] text-[#6b7676]">
            1.5<span className="w-[2px] h-[26px] bg-[#333] ml-[1px]" />
          </div>
          <span className="ml-[12px]"><Caret /></span>
        </div>
        <div className="absolute left-[1939px] top-[719px] w-[760px] h-[30px] bg-[#f3f5f4] border-2 border-[#7d8b89] flex items-center pl-[4px] text-[22.5px] text-[#1f2a33] whitespace-nowrap">
          Specify distance, or select coplanar profiles/faces to modify the selection
        </div>
      </div>

      <div className="h-[102px] bg-[#cdd7d5] flex items-center shrink-0 relative">
        <svg width="240" height="34" viewBox="0 0 240 34" className="ml-[23px]">
          <path d="M0 2H3V32H0ZM24 2V32L4 17Z" fill="#46525a" />
          <path d="M50 17L66 2V32ZM68 7H72V27H68Z" fill="#46525a" />
          <path d="M104 1L129 17L104 33Z" fill="#46525a" />
          <path d="M154 7H158V27H154ZM160 2L181 17L160 32Z" fill="#46525a" />
          <path d="M209 2L229 17L209 32ZM230 2H233V32H230Z" fill="#46525a" />
        </svg>
        <div className="ml-[33px] w-[50px] h-[51px] mb-[-2px] bg-[#4e98d2] rounded-[3px] flex items-center justify-center relative">
          <svg width="36" height="38" viewBox="0 0 36 38">
            <rect x="2" y="2" width="32" height="34" fill="#c5ddf2" stroke="#101418" strokeWidth="3" />
            <path d="M9 8V29H23" fill="none" stroke="#2450a0" strokeWidth="3" />
            <path d="M14 24L29 6L33 10L19 27L13 28Z" fill="#f2c21c" />
          </svg>
          <div className="absolute left-[37px] top-[-4px]">
            <svg width="26" height="68" viewBox="0 0 26 68">
              <path d="M0 0H26V10L13 22L0 10Z" fill="#5f6b6b" />
              <rect x="11" y="18" width="3" height="48" fill="#5f6b6b" />
            </svg>
          </div>
          <div className="absolute left-[26px] top-[51px] w-[3px] h-[12px] bg-[#5f6b6b]" />
        </div>
        <svg width="34" height="36" viewBox="0 0 24 24" className="ml-auto mr-[18px]">
          <path d="M10 0H14L15 4L18 5L21 3L23 6L21 9L22 11L24 12V14L21 15L20 18L22 21L19 23L16 21L14 22L13 24H11L10 21L7 20L4 22L2 19L4 16L3 14L0 13V10L3 9L4 6L2 3L5 1L8 3L10 2ZM12 8A4 4 0 1 0 12 16A4 4 0 1 0 12 8Z" fill="#4a5757" fillRule="evenodd" />
        </svg>
      </div>

      <Taskbar />
    </div>
  );
}
